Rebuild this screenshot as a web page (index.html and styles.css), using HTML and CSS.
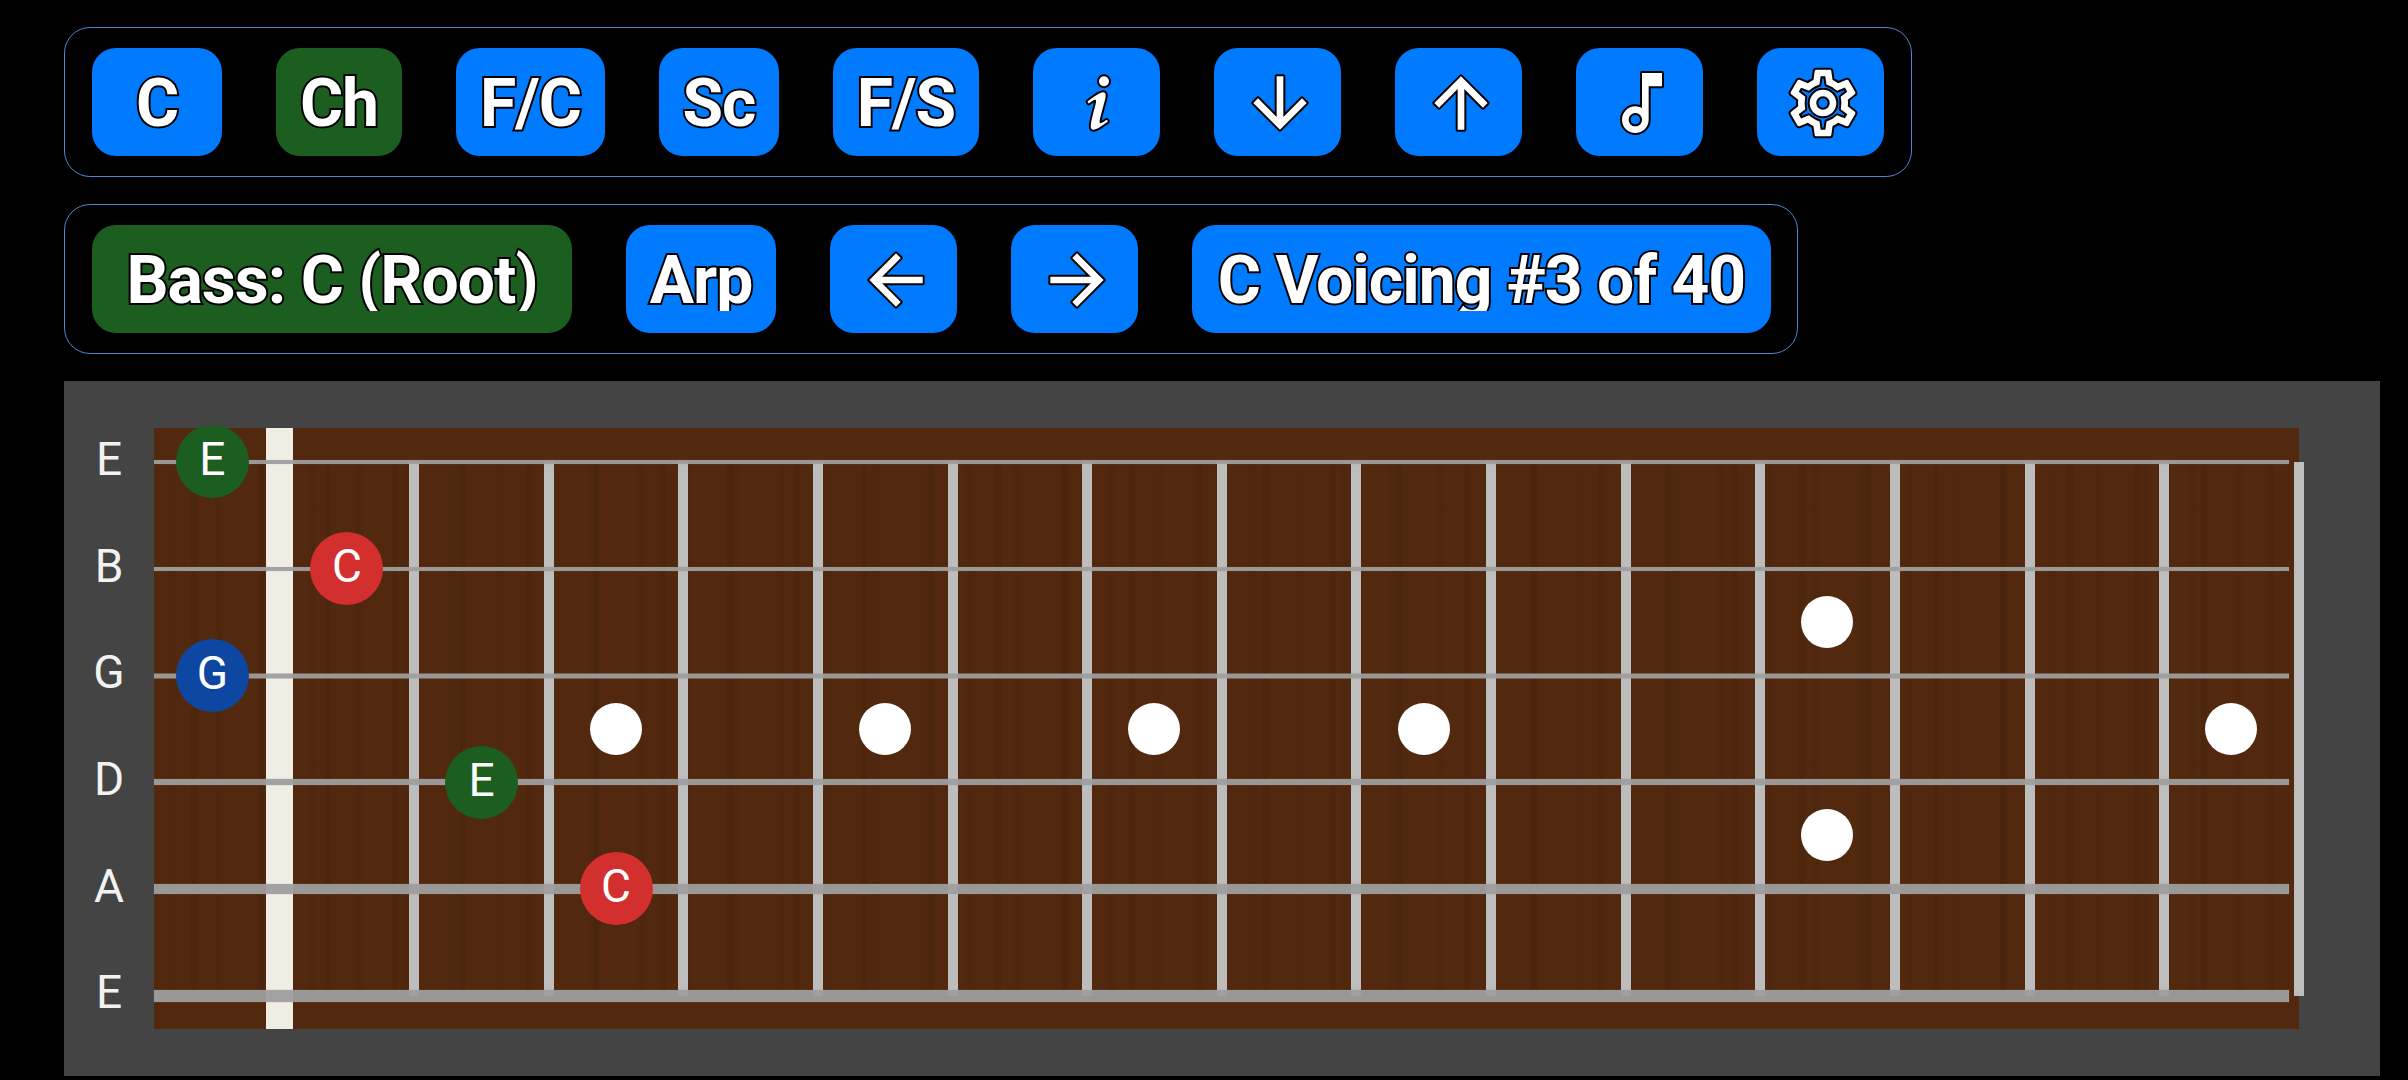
FILE: index.html
```html
<!DOCTYPE html>
<html lang="en">
<head>
    <meta charset="UTF-8">
    <meta name="viewport" content="width=device-width, initial-scale=1.0">
    <title>Guitar Fretboard</title>
    <link rel="stylesheet" href="styles.css">
</head>
<body>
    <div class="toolbar">
        <button class="btn btn-c"><span>C</span></button>
        <button class="btn btn-ch active"><span>Ch</span></button>
        <button class="btn btn-fc"><span>F/C</span></button>
        <button class="btn btn-sc"><span>Sc</span></button>
        <button class="btn btn-fs"><span>F/S</span></button>
        <button class="btn btn-icon"><svg viewBox="0 0 24 24"><path d="M13.5,4A1.5,1.5 0 0,0 12,5.5A1.5,1.5 0 0,0 13.5,7A1.5,1.5 0 0,0 15,5.5A1.5,1.5 0 0,0 13.5,4M13.14,8.77C11.95,8.87 8.7,11.46 8.7,11.46C8.5,11.61 8.56,11.6 8.72,11.88C8.88,12.15 8.86,12.17 9.05,12.04C9.25,11.91 9.58,11.7 10.13,11.36C12.25,10 10.47,13.14 9.56,18.43C9.2,21.05 11.56,19.7 12.17,19.3C12.77,18.91 14.38,17.8 14.54,17.69C14.76,17.54 14.6,17.42 14.43,17.17C14.31,17 14.19,17.12 14.19,17.12C13.54,17.55 12.35,18.45 12.19,17.88C12,17.31 13.22,13.4 13.89,10.71C14,10.07 14.3,8.67 13.14,8.77Z"/></svg></button>
        <button class="btn btn-icon"><svg viewBox="0 0 24 24"><path d="M20 12l-1.41-1.41L13 16.17V4h-2v12.17l-5.58-5.59L4 12l8 8 8-8z"/></svg></button>
        <button class="btn btn-icon"><svg viewBox="0 0 24 24"><path d="M4 12l1.41 1.41L11 7.83V20h2V7.83l5.58 5.59L20 12l-8-8-8 8z"/></svg></button>
        <button class="btn btn-icon"><svg viewBox="0 0 24 24"><path d="M12 3l.01 10.55c-.59-.34-1.27-.55-2-.55C7.79 13 6 14.79 6 17s1.79 4 4 4 4-1.79 4-4V7h4V3h-6zm-1.99 16c-1.1 0-2-.9-2-2s.9-2 2-2 2 .9 2 2-.9 2-2 2z"/></svg></button>
        <button class="btn btn-icon"><svg viewBox="0 0 24 24"><path d="M19.43 12.98c.04-.32.07-.64.07-.98 0-.34-.03-.66-.07-.98l2.11-1.65c.19-.15.24-.42.12-.64l-2-3.46c-.09-.16-.26-.25-.44-.25-.06 0-.12.01-.17.03l-2.49 1c-.52-.4-1.08-.73-1.69-.98l-.38-2.65C14.46 2.18 14.25 2 14 2h-4c-.25 0-.46.18-.49.42l-.38 2.65c-.61.25-1.17.59-1.69.98l-2.49-1c-.06-.02-.12-.03-.18-.03-.17 0-.34.09-.43.25l-2 3.46c-.13.22-.07.49.12.64l2.11 1.65c-.04.32-.07.65-.07.98 0 .33.03.66.07.98l-2.11 1.65c-.19.15-.24.42-.12.64l2 3.46c.09.16.26.25.44.25.06 0 .12-.01.17-.03l2.49-1c.52.4 1.08.73 1.69.98l.38 2.65c.03.24.24.42.49.42h4c.25 0 .46-.18.49-.42l.38-2.65c.61-.25 1.17-.59 1.69-.98l2.49 1c.06.02.12.03.18.03.17 0 .34-.09.43-.25l2-3.46c.12-.22.07-.49-.12-.64l-2.11-1.65zm-1.98-1.71c.04.31.05.52.05.73 0 .21-.02.43-.05.73l-.14 1.13.89.7 1.08.84-.7 1.21-1.27-.51-1.04-.42-.9.68c-.43.32-.84.56-1.25.73l-1.06.43-.16 1.13-.2 1.35h-1.4l-.19-1.35-.16-1.13-1.06-.43c-.43-.18-.83-.41-1.23-.71l-.91-.7-1.06.43-1.27.51-.7-1.21 1.08-.84.89-.7-.14-1.13c-.03-.31-.05-.54-.05-.74s.02-.43.05-.73l.14-1.13-.89-.7-1.08-.84.7-1.21 1.27.51 1.04.42.9-.68c.43-.32.84-.56 1.25-.73l1.06-.43.16-1.13.2-1.35h1.39l.19 1.35.16 1.13 1.06.43c.43.18.83.41 1.23.71l.91.7 1.06-.43 1.27-.51.7 1.21-1.07.85-.89.7.14 1.13zM12 8c-2.21 0-4 1.79-4 4s1.79 4 4 4 4-1.79 4-4-1.79-4-4-4zm0 6c-1.1 0-2-.9-2-2s.9-2 2-2 2 .9 2 2-.9 2-2 2z"/></svg></button>
    </div>

    <div class="toolbar toolbar-second">
        <button class="btn btn-bass active"><span>Bass: C (Root)</span></button>
        <button class="btn btn-arp"><span>Arp</span></button>
        <button class="btn btn-icon"><svg viewBox="0 0 24 24"><path d="M20 11H7.83l5.59-5.59L12 4l-8 8 8 8 1.41-1.41L7.83 13H20v-2z"/></svg></button>
        <button class="btn btn-icon"><svg viewBox="0 0 24 24"><path d="M12 4l-1.41 1.41L16.17 11H4v2h12.17l-5.58 5.59L12 20l8-8z"/></svg></button>
        <button class="btn btn-voicing"><span>C Voicing #3 of 40</span></button>
    </div>

    <div class="panel">
        <div class="string-names">
            <span>E</span>
            <span>B</span>
            <span>G</span>
            <span>D</span>
            <span>A</span>
            <span>E</span>
        </div>
        <div class="board">
            <div class="grain"></div>
            <div class="nut"></div>
            <div class="frets">
                <i></i><i></i><i></i><i></i><i></i>
                <i></i><i></i><i></i><i></i><i></i>
                <i></i><i></i><i></i><i></i><i></i>
            </div>
            <div class="strings">
                <i class="s1"></i>
                <i class="s2"></i>
                <i class="s3"></i>
                <i class="s4"></i>
                <i class="s5"></i>
                <i class="s6"></i>
            </div>
            <div class="marks">
                <b class="dot" style="grid-column: 4; grid-row: 6"></b>
                <b class="dot" style="grid-column: 6; grid-row: 6"></b>
                <b class="dot" style="grid-column: 8; grid-row: 6"></b>
                <b class="dot" style="grid-column: 10; grid-row: 6"></b>
                <b class="dot" style="grid-column: 13; grid-row: 4"></b>
                <b class="dot" style="grid-column: 13; grid-row: 8"></b>
                <b class="dot" style="grid-column: 16; grid-row: 6"></b>
                <b class="note green" style="grid-column: 1; grid-row: 1">E</b>
                <b class="note red" style="grid-column: 2; grid-row: 3">C</b>
                <b class="note blue" style="grid-column: 1; grid-row: 5">G</b>
                <b class="note green" style="grid-column: 3; grid-row: 7">E</b>
                <b class="note red" style="grid-column: 4; grid-row: 9">C</b>
            </div>
        </div>
    </div>
</body>
</html>
```

FILE: styles.css
```css
* {
    box-sizing: border-box;
}
body {
    margin: 0;
    width: 2408px;
    height: 1080px;
    overflow: hidden;
    background-color: #000;
    padding: 27px 0 0 64px;
    font-family: Roboto, sans-serif;
}
.toolbar {
    display: flex;
    gap: 54px;
    width: 1848px;
    height: 150px;
    padding: 20px 27px;
    border: 1px solid #4a88d0;
    border-radius: 26px;
}
.toolbar-second {
    width: 1734px;
    margin-top: 27px;
}
.btn {
    flex: none;
    display: flex;
    align-items: center;
    justify-content: center;
    height: 108px;
    padding: 0;
    border: none;
    border-radius: 24px;
    background-color: #007bff;
    color: #fff;
    font-family: Roboto, sans-serif;
    font-size: 66px;
    font-weight: 700;
    letter-spacing: -1px;
    white-space: nowrap;
    -webkit-text-stroke: 4px #000;
    paint-order: stroke fill;
}
.btn.active {
    background-color: #1b5e20;
}
/* descenders get cut off under the label box */
.btn span {
    display: block;
    margin-top: 3px;
    line-height: 61px;
    clip-path: inset(-20px -20px 0 -20px);
}
.btn svg {
    width: 80px;
    height: 80px;
    fill: #fff;
    stroke: #000;
    stroke-width: 1.2;
    paint-order: stroke fill;
    stroke-linejoin: round;
}
.btn-c { width: 130px; }
.btn-ch { width: 126px; }
.btn-fc { width: 149px; }
.btn-sc { width: 120px; }
.btn-fs { width: 146px; }
.btn-icon { width: 127px; padding: 2px 0 0 4px; }
.btn-bass { width: 480px; }
.btn-arp { width: 150px; }
.btn-voicing { width: 579px; }

.panel {
    display: flex;
    width: 2316px;
    height: 695px;
    margin-top: 27px;
    padding-top: 47px;
    background-color: #444;
}
.string-names {
    display: flex;
    flex-direction: column;
    flex: none;
    width: 90px;
    margin-top: -22px;
    text-align: center;
    color: #f2f2f2;
    font-size: 46px;
}
.string-names span {
    height: 106.7px;
    line-height: 106.7px;
}
.board {
    position: relative;
    width: 2145px;
    height: 601px;
    background-color: #52290f;
}
.grain {
    position: absolute;
    left: 0;
    top: 34px;
    width: 2135px;
    height: 534px;
    background-image:
        repeating-linear-gradient(90deg, transparent 0 37px, rgba(60, 28, 8, 0.25) 37px 43px, transparent 43px 67px),
        repeating-linear-gradient(90deg, transparent 0 13px, rgba(60, 28, 8, 0.12) 13px 21px, transparent 21px 47px);
}
.nut {
    position: absolute;
    left: 112px;
    top: 0;
    width: 27px;
    height: 601px;
    background-color: #f0ede4;
}
.frets {
    position: absolute;
    left: 255px;
    top: 34px;
    display: flex;
    justify-content: space-between;
    width: 1895px;
    height: 534px;
}
.frets i {
    width: 10px;
    background-color: #bdbdbd;
}
.strings {
    position: absolute;
    left: 0;
    top: 34px;
    display: flex;
    flex-direction: column;
    justify-content: space-between;
    width: 2135px;
    height: 534px;
}
.strings i {
    height: 0;
    position: relative;
}
.strings i::after {
    content: "";
    position: absolute;
    left: 0;
    right: 0;
    top: 0;
    transform: translateY(-50%);
    background-color: rgba(158, 158, 158, 0.95);
    box-shadow: 0 0 1px rgba(158, 140, 125, 0.6);
}
.s1::after, .s2::after { height: 4px; }
.s3::after { height: 5px; }
.s4::after { height: 6px; }
.s5::after { height: 10px; }
.s6::after { height: 12px; }
.marks {
    position: absolute;
    left: -9px;
    top: 7px;
    display: grid;
    grid-template-columns: repeat(16, 134.6px);
    grid-template-rows: repeat(11, 53.4px);
    place-items: center;
}
.dot {
    display: block;
    width: 52px;
    height: 52px;
    border-radius: 50%;
    background-color: #fff;
}
.note {
    display: flex;
    align-items: center;
    justify-content: center;
    width: 73px;
    height: 73px;
    padding-bottom: 5px;
    border-radius: 50%;
    color: #fff;
    font-size: 46px;
    font-weight: 400;
}
.green { background-color: #1b5e20; }
.red { background-color: #d32f2f; }
.blue { background-color: #0d47a1; }
```
